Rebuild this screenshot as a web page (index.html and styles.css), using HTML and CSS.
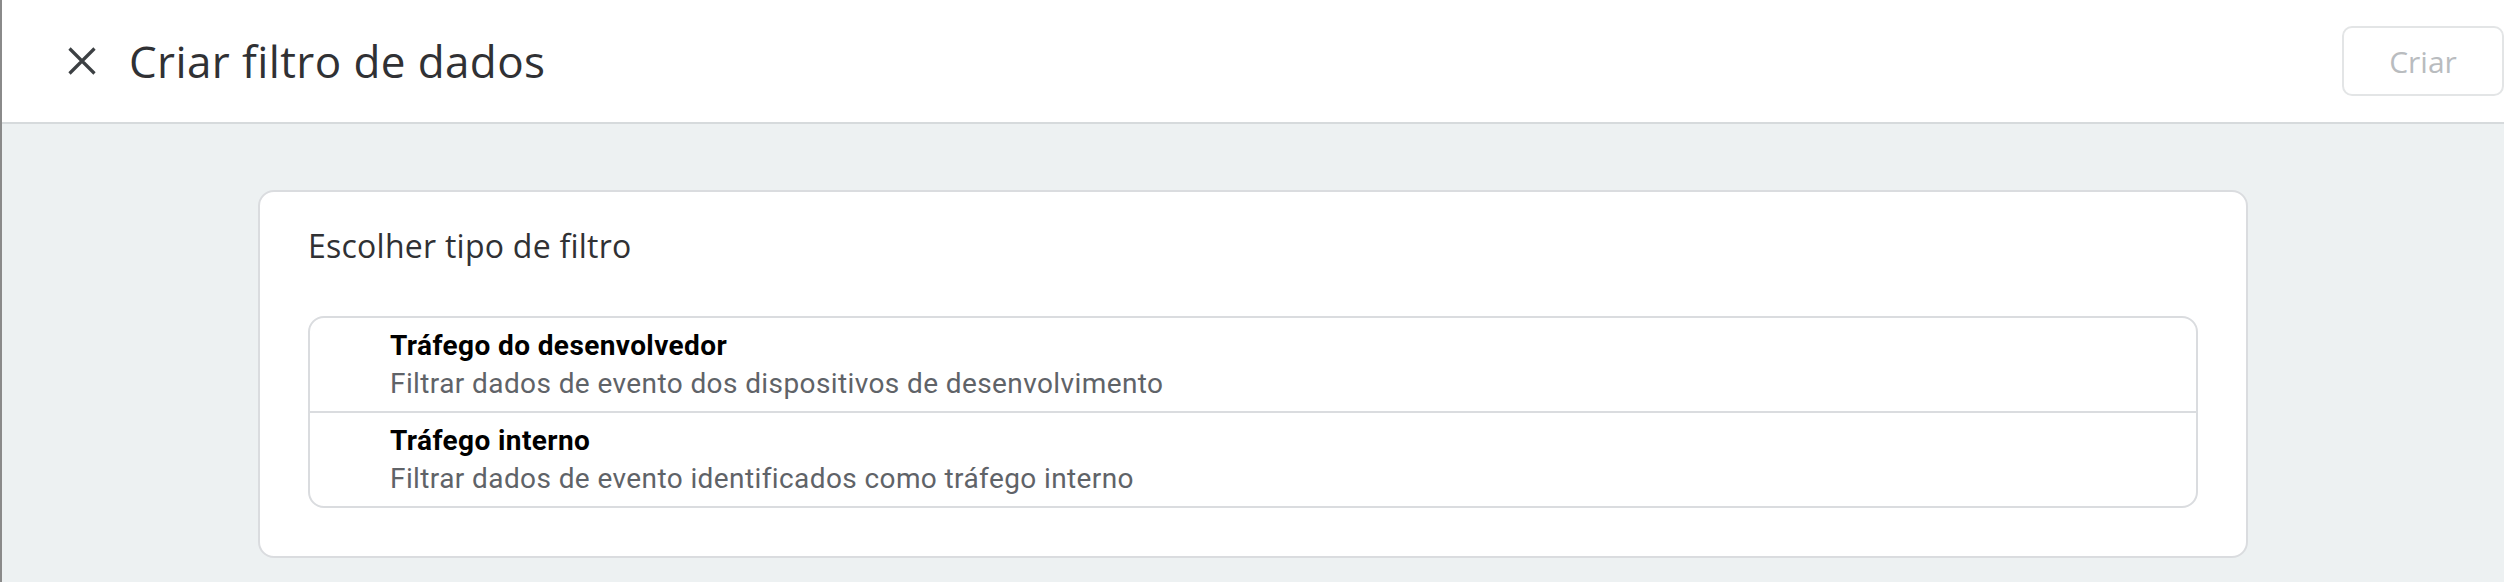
FILE: index.html
```html
<!DOCTYPE html>
<html lang="pt">
<head>
<meta charset="utf-8">
<title>Criar filtro de dados</title>
<link rel="stylesheet" href="styles.css">
</head>
<body>
<header class="topbar">
  <button class="close-btn" aria-label="Fechar">
    <svg class="close-icon" viewBox="0 0 28 28" width="28" height="28">
      <path d="M1.5 1.5 L26.5 26.5 M26.5 1.5 L1.5 26.5" stroke="#3c4043" stroke-width="3.2" fill="none"/>
    </svg>
  </button>
  <h1 class="page-title">Criar filtro de dados</h1>
  <button class="create-btn" disabled>Criar</button>
</header>
<main class="content">
  <section class="card">
    <h2 class="card-title">Escolher tipo de filtro</h2>
    <div class="option-list">
      <div class="option">
        <div class="option-title">Tráfego do desenvolvedor</div>
        <div class="option-desc">Filtrar dados de evento dos dispositivos de desenvolvimento</div>
      </div>
      <div class="option">
        <div class="option-title">Tráfego interno</div>
        <div class="option-desc">Filtrar dados de evento identificados como tráfego interno</div>
      </div>
    </div>
  </section>
</main>
</body>
</html>
```

FILE: styles.css
```css
html, body {
  margin: 0;
  padding: 0;
}
body {
  background: #edf1f2;
  border-left: 2px solid #8a8a8a;
  min-height: 582px;
  box-sizing: border-box;
  font-family: "Open Sans", "Noto Sans", sans-serif;
}
.topbar {
  display: flex;
  align-items: center;
  height: 122px;
  background: #ffffff;
  border-bottom: 2px solid #d6dadc;
  padding-left: 66px;
}
.close-btn {
  display: flex;
  align-items: center;
  justify-content: center;
  border: 0;
  padding: 0;
  margin: 0;
  background: transparent;
  width: 28px;
  height: 28px;
}
.close-icon {
  display: block;
}
.page-title {
  margin: 0 0 0 33px;
  font-family: "Open Sans", "Noto Sans", sans-serif;
  font-weight: 400;
  font-size: 44px;
  color: #303134;
  letter-spacing: 0.4px;
  flex: 1;
}
.create-btn {
  width: 162px;
  height: 70px;
  border: 2px solid #e3e5e6;
  border-radius: 10px;
  background: #ffffff;
  color: #b9bcbf;
  font-family: "Open Sans", "Noto Sans", sans-serif;
  font-size: 30px;
  font-weight: 500;
  padding: 0;
}
.content {
  padding-top: 66px;
}
.card {
  width: 1990px;
  margin: 0 auto;
  box-sizing: border-box;
  background: #ffffff;
  border: 2px solid #dadcdf;
  border-radius: 16px;
  padding: 34px 48px 48px;
}
.card-title {
  margin: 0 0 50px 0;
  font-family: "Open Sans", "Noto Sans", sans-serif;
  font-weight: 400;
  font-size: 32px;
  line-height: 40px;
  letter-spacing: 0.25px;
  color: #303134;
}
.option-list {
  border: 2px solid #dadcdf;
  border-radius: 16px;
  overflow: hidden;
}
.option {
  padding: 9px 0 8px 80px;
  font-family: Roboto, "Liberation Sans", sans-serif;
  letter-spacing: 0.4px;
}
.option + .option {
  border-top: 2px solid #dadcdf;
}
.option-title {
  font-size: 28px;
  line-height: 38px;
  font-weight: 700;
  color: #000000;
}
.option-desc {
  font-size: 28px;
  line-height: 38px;
  font-weight: 400;
  color: #5f6368;
}
```
